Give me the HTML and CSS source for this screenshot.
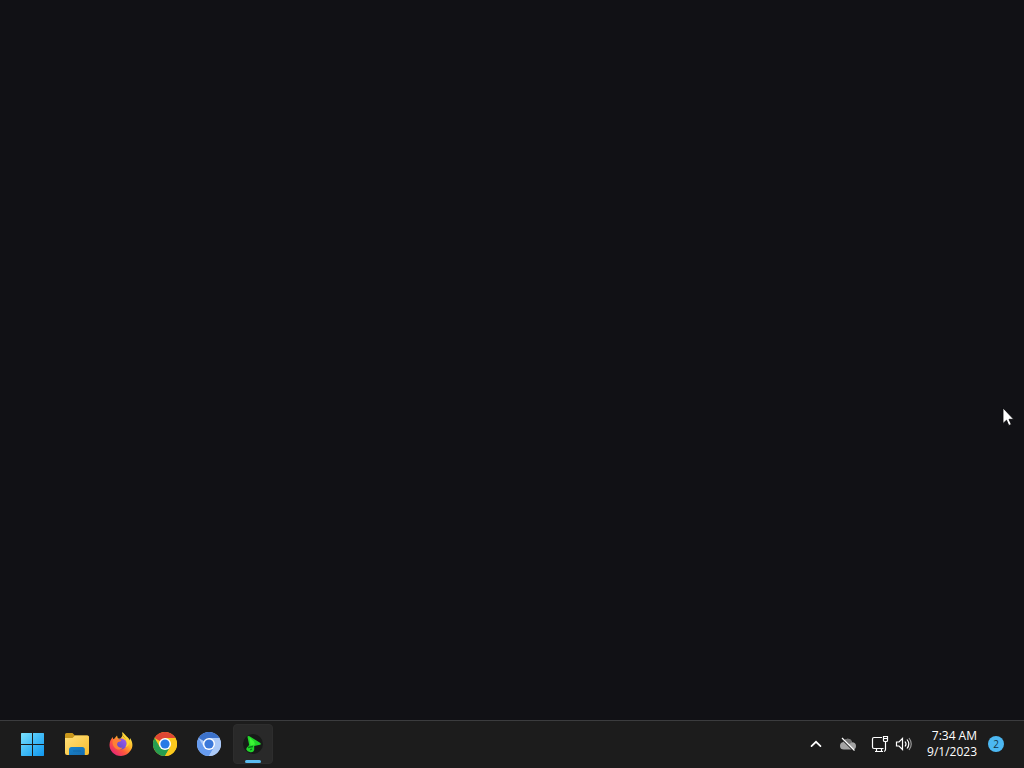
FILE: index.html
```html
<!DOCTYPE html>
<html lang="en">
<head>
<meta charset="utf-8">
<title>Desktop</title>
<link rel="stylesheet" href="styles.css">
</head>
<body>
<main class="desktop">
  <svg class="cursor" width="13" height="20" viewBox="0 0 13 20" aria-hidden="true"><path d="M1 1v15.500l3.500-3.300 2.300 5.300 2.500-1.100-2.300-5.100h4.700z" fill="#fff" stroke="#050507" stroke-width=".8"/></svg>
</main>
<footer class="taskbar">
  <nav class="apps" aria-label="Taskbar">
    <button class="app" type="button" aria-label="Start">
      <svg width="24" height="24" viewBox="1 0 24 24">
        <defs><linearGradient id="win" gradientUnits="userSpaceOnUse" x1="1" y1="1" x2="23" y2="23"><stop offset="0" stop-color="#7be2ff"/><stop offset=".5" stop-color="#42bdf8"/><stop offset="1" stop-color="#149af0"/></linearGradient></defs>
        <path fill="url(#win)" d="M1.500 1H12v11H1V1.500zM13 1h10.500l.5.500V12H13zM1 13h11v11H1.500l-.5-.5zM13 13h11v10.500l-.5.500H13z"/>
      </svg>
    </button>
    <button class="app" type="button" aria-label="File Explorer">
      <svg width="26" height="24" viewBox="0 0 26 24">
        <defs><linearGradient id="fold" x1="0" y1="0" x2="1" y2="1"><stop offset="0" stop-color="#ffe07b"/><stop offset="1" stop-color="#f8bd2e"/></linearGradient><linearGradient id="tray" x1="0" y1="0" x2="1" y2="1"><stop offset="0" stop-color="#1684ce"/><stop offset="1" stop-color="#176cae"/></linearGradient></defs>
        <path d="M1 2.500Q1 1 2.500 1h6L11 3.500h12q2 0 2 2V12H1z" fill="#c9971b"/>
        <path d="M1 6h7.500L11 3.500h12.500Q25 3.500 25 5v16q0 2-2 2H3q-2 0-2-2z" fill="url(#fold)"/>
        <path d="M5 23v-5.500Q5 15 7.500 15h10.800q2.500 0 2.500 2.500V23z" fill="url(#tray)"/><path d="M9 19h8" stroke="#1268a8"/>
      </svg>
    </button>
    <button class="app" type="button" aria-label="Firefox">
      <svg width="24" height="24" viewBox="0 0 24 24">
        <defs><linearGradient id="fox" x1=".85" y1=".1" x2=".15" y2=".9"><stop offset="0" stop-color="#fff04b"/><stop offset=".35" stop-color="#ffb229"/><stop offset=".65" stop-color="#ff593c"/><stop offset="1" stop-color="#e72575"/></linearGradient><linearGradient id="globe" x1="1" y1="0" x2="0" y2="1"><stop offset="0" stop-color="#a35af5"/><stop offset="1" stop-color="#5549bb"/></linearGradient></defs>
        <path fill="url(#fox)" d="M13.500 0c-.7 1.700-.5 3 .7 4.300l2.700 2.500L18 5l3 3.500V6c3 4 3.200 9 .6 12.600A12 12 0 0 1 12 24C5.300 24 .5 19 .5 13c0-3.400 1.500-6.300 3.500-8v2.300l1.500-.8L8 3.400l.8 2.800 2.400.5L13 4.600z"/>
        <circle cx="12.300" cy="12" r="5.400" fill="url(#globe)"/>
        <path d="M4 8c2-1.700 4-1.600 5.500-.8l3 .9c-.6 1.400-1.700 1.700-3.400 1.800-1.200 1.100-1.300 2.700-.4 4 1.300 1.700 3.200 2.100 5 1.600-2 3-6.500 2.800-8.700-.7C3.500 12.800 3.200 10 4 8z" fill="#ff8035"/>
        <path d="M13.500 0c-.7 2 .2 3.800 2 5.600 3 3 3 7.200.9 9.600 3.200-1.300 4.800-4.200 3.900-8z" fill="#ffd638"/>
      </svg>
    </button>
    <button class="app" type="button" aria-label="Google Chrome">
      <svg width="24" height="24" viewBox="0 0 24 24">
        <circle cx="12" cy="12" r="12" fill="#fbc91d"/>
        <path d="M12 12 1.600 6A12 12 0 0 1 22.400 6H12z" fill="#df4634"/>
        <path d="M1.600 6A12 12 0 0 0 12 24l5.200-9L12 12 6.800 15z" fill="#279d50"/>
        <path d="M12 6h10.400A12 12 0 0 1 12 24l5.200-9z" fill="#fbc91d"/>
        <circle cx="12" cy="12" r="6" fill="#fff"/><circle cx="12" cy="12" r="4.600" fill="#287ae6"/>
      </svg>
    </button>
    <button class="app" type="button" aria-label="Chromium">
      <svg width="24" height="24" viewBox="0 0 24 24">
        <circle cx="12" cy="12" r="12" fill="#abc9f8"/>
        <path d="M12 12 1.600 6A12 12 0 0 1 22.400 6H12z" fill="#3c72cb"/>
        <path d="M1.600 6A12 12 0 0 0 12 24l5.200-9L12 12 6.800 15z" fill="#669bef"/>
        <path d="M12 6h10.400A12 12 0 0 1 12 24l5.200-9z" fill="#abc9f8"/>
        <circle cx="12" cy="12" r="6" fill="#fff"/><circle cx="12" cy="12" r="4.600" fill="#3b78da"/>
      </svg>
    </button>
    <button class="app active" type="button" aria-label="Active app">
      <svg width="24" height="24" viewBox="0 0 24 24">
        <circle cx="12" cy="12" r="10" fill="#171a18"/>
        <path d="M6.500 5Q6.500 3.300 8.500 4.300L19 10.800q1.500 1.200 0 2L13.200 14v4q-.7 2.500-3.700 2.200Q6 19.800 5.300 17.500q-.3-1.300 2.900-4.500z" fill="#22d52b"/>
        <path d="m8.500 5.500 4.500 4 1 3-4.500 1z" fill="#3cf535"/><path d="m7 15.500 5-1M9 18l2-1" stroke="#087c18" stroke-width="1.300"/>
      </svg>
    </button>
  </nav>
  <div class="tray">
    <button class="tray-button" type="button" aria-label="Show hidden icons"><svg width="16" height="16" viewBox="0 0 16 16"><path d="m3.500 10.200 4.500-4.400 4.500 4.400" fill="none" stroke="#fff" stroke-width="1.700" stroke-linecap="round"/></svg></button>
    <button class="tray-button" type="button" aria-label="OneDrive"><svg width="18" height="16" viewBox="0 0 18 16"><path d="M5 13.500q-4 0-4-3.500 0-3.500 3.300-4C6 2 11.500 1.500 13 6.200q4 .3 4 3.800 0 3.500-3.500 3.500z" fill="#a3a3a3"/><path d="M4.300 6 9.500 8.500 13 6.200C11.500 1.500 6 2 4.300 6z" fill="#737373"/><path d="m2.500 2.500 13 13" stroke="#1c1c1c" stroke-width="1.600"/><path d="m3 2 12.500 12.500" stroke="#fff" stroke-width="1.300"/></svg></button>
    <button class="tray-button status" type="button" aria-label="Network and volume">
      <svg width="18" height="18" viewBox="0 0 18 18" fill="none" stroke="#fff" stroke-width="1.200"><path d="M11 2.500H3Q1.500 2.500 1.500 4v8q0 1.500 1.500 1.500h9.500M5.500 13.500v3M10.500 13.500v3M4 16.500h8"/><path d="M12.500 1.500h4v4q0 1-1 1h-2q-1 0-1-1zM12.500 3.500h4M14.500 6.500v8q0 1.500-1.500 2"/></svg>
      <svg width="18" height="16" viewBox="0 0 18 16" fill="none" stroke="#fff" stroke-width="1.200"><path d="M1.500 6H4l3.500-3.500v11L4 10H1.500z"/><path d="M10 5.500q2 2.500 0 5M12 3.500q3.600 4.500 0 9"/><path d="M14 2q4.500 6 0 12" stroke="#999"/></svg>
    </button>
    <button class="clock" type="button"><time datetime="2023-09-01T07:34">7:34 AM<br>9/1/2023</time></button>
    <button class="badge" type="button" aria-label="2 notifications">2</button>
  </div>
</footer>
</body>
</html>
```
FILE: styles.css
```css
* { box-sizing: border-box; }

body {
  display: flex;
  flex-direction: column;
  min-height: 100vh;
  margin: 0;
  background: #111115;
  color: #fff;
  font-family: "Open Sans", "Noto Sans", sans-serif;
}

button {
  padding: 0;
  border: 0;
  background: none;
  color: inherit;
  font: inherit;
}

svg { display: block; }

.desktop {
  position: relative;
  flex: 1;
}

.cursor {
  position: absolute;
  top: 407px;
  right: 9px;
}

.taskbar {
  display: flex;
  align-items: center;
  justify-content: space-between;
  height: 48px;
  padding: 0 20px 2px 13px;
  border-top: 1px solid #3b3c3e;
  background: #1c1c1c;
}

.apps {
  display: flex;
  gap: 4px;
}

.app {
  position: relative;
  display: grid;
  place-items: center;
  width: 40px;
  height: 40px;
  border-radius: 4px;
}

.active {
  border: 1px solid #2d2d2d;
  background: #292929;
}

.active::after {
  position: absolute;
  bottom: 0;
  width: 16px;
  height: 3px;
  border-radius: 2px;
  background: #5abcf0;
  content: "";
}

.tray {
  display: flex;
  align-items: center;
}

.tray-button {
  display: grid;
  place-items: center;
  width: 32px;
  height: 40px;
}

.status {
  display: flex;
  align-items: center;
  gap: 6px;
  width: auto;
  padding: 0 14px 0 7px;
}

.clock {
  padding-right: 11px;
  font-size: 12px;
  line-height: 16px;
  text-align: right;
}

.badge {
  width: 16px;
  height: 16px;
  border-radius: 50%;
  background: #4cb8f2;
  color: #12364a;
  font-size: 10px;
  line-height: 16px;
  text-align: center;
}
```
